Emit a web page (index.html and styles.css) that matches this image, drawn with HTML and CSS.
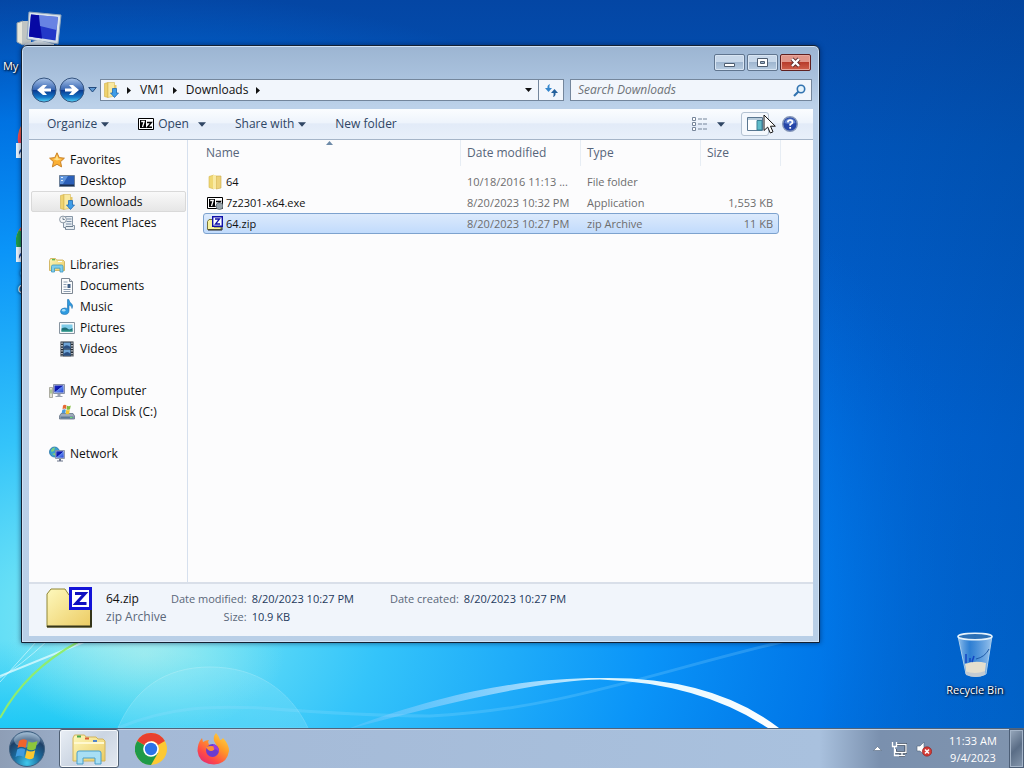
FILE: index.html
```html
<!DOCTYPE html>
<html lang="en">
  <head>
    <meta charset="UTF-8" />
    <meta name="viewport" content="width=device-width, initial-scale=1.0" />
    <title>Downloads</title>
    <link rel="stylesheet" href="styles.css">
  </head>
  <body>
    <!-- Icon symbols -->
    <svg class="defs" width="0" height="0">
      <defs>
        <linearGradient id="g-folder" x1="0" y1="0" x2="1" y2="1">
          <stop offset="0" stop-color="#fdf8bc" /><stop offset="1" stop-color="#eccb62" />
        </linearGradient>
        <linearGradient id="g-screen" x1="0" y1="0" x2="1" y2="1">
          <stop offset="0" stop-color="#1a2fc4" /><stop offset="0.45" stop-color="#0a12a8" /><stop offset="0.5" stop-color="#5f86ee" /><stop offset="1" stop-color="#2143d4" />
        </linearGradient>
        <linearGradient id="g-round" x1="0" y1="0" x2="0" y2="1">
          <stop offset="0" stop-color="#a8c3e8" /><stop offset="0.48" stop-color="#3a68b4" /><stop offset="0.52" stop-color="#0a3a90" /><stop offset="0.8" stop-color="#1578c8" /><stop offset="1" stop-color="#58d8f8" />
        </linearGradient>
        <radialGradient id="g-orb" cx="0.5" cy="0.9" r="0.85">
          <stop offset="0" stop-color="#3fc8ec" /><stop offset="0.45" stop-color="#1b6a9c" /><stop offset="0.8" stop-color="#1d3f66" /><stop offset="1" stop-color="#7d9cba" />
        </radialGradient>
        <linearGradient id="g-fox" x1="1" y1="0" x2="0.3" y2="1">
          <stop offset="0" stop-color="#ffe14a" /><stop offset="0.45" stop-color="#ff9a28" /><stop offset="0.8" stop-color="#ff4a48" /><stop offset="1" stop-color="#e8306a" />
        </linearGradient>
        <linearGradient id="g-bin" x1="0" y1="0" x2="1" y2="0">
          <stop offset="0" stop-color="#b8d8f4" stop-opacity="0.8" /><stop offset="0.35" stop-color="#5c9cdc" stop-opacity="0.5" /><stop offset="1" stop-color="#c0dcf6" stop-opacity="0.8" />
        </linearGradient>
      </defs>
      <symbol id="i-star" viewBox="0 0 16 16">
        <path d="M8 .8 10.2 5.6 15.4 6.2 11.5 9.7 12.6 14.9 8 12.3 3.4 14.9 4.5 9.7.6 6.2 5.8 5.6Z" fill="#fbb034" stroke="#c98228" />
        <path d="M8 3 9.3 6.5 12.8 7 8 8.4 4 7 6.5 6.5Z" fill="#ffe08a" />
      </symbol>
      <symbol id="i-desktop" viewBox="0 0 16 16">
        <path d="M.5 2.5h15v11H.5Z" fill="#2b5fb8" stroke="#6d8098" />
        <path d="M1 3h8L4 11H1Z" fill="#5f94dc" /><path d="M1 11.5h14V13H1Z" fill="#1c3050" /><path d="M2 4h2v1H2Zm0 3h2v1H2Z" fill="#dcecff" />
      </symbol>
      <symbol id="i-downloads" viewBox="0 0 16 16">
        <path d="M1.5 1.5 5 .5v15l-3.500-1Z" fill="#efd36e" stroke="#d0ae48" stroke-width=".6" />
        <path d="M5 .5h6.500v13.500L5 15.500Z" fill="#f9e9a0" stroke="#d5b757" stroke-width=".6" /><path d="M11 3h2.500v8H11Z" fill="#e3c76a" />
        <path d="M9.500 6.500h4V11h2l-4 4.500-4-4.500h2Z" fill="#3f9de8" stroke="#1f69b4" stroke-width=".8" />
      </symbol>
      <symbol id="i-recent" viewBox="0 0 16 16">
        <path d="M4.500 1.500h9v9h2v4H6.500v-2h-2Z" fill="#e7edf2" stroke="#8796a6" />
        <path d="M7.500 4h5M7.500 6.500h5M7 9h5.500" stroke="#7a8ea5" /><circle cx="4" cy="4.500" r="3.400" fill="#f4f6f8" stroke="#8b98a5" /><path d="M4 2.500v2h1.800M7 14.500q-2-2 0-3h7" fill="none" stroke="#6d7d8d" />
      </symbol>
      <symbol id="i-libraries" viewBox="0 0 16 16">
        <path d="M.5 3.500 1.500 1.500h5l1 1.500h6.500l1.500 1.500v9H.5Z" fill="url(#g-folder)" stroke="#caa94e" stroke-width=".8" />
        <path d="M3 2.700h3" stroke="#4ab04a" stroke-width="1.200" /><path d="M9 4.500h4" stroke="#fff" />
        <path d="M2.500 15v-5.500q0-1.500 1.500-1.500h8.500Q14 8 14 9.500V15h-3v-3.800H5.500V15Z" fill="#7fcdec" stroke="#3c98c2" stroke-width=".8" />
      </symbol>
      <symbol id="i-documents" viewBox="0 0 16 16">
        <path d="M2.500.5h8l3 3v12h-11Z" fill="#fbfcfd" stroke="#7d8793" /><path d="M10.500.5v3h3" fill="#d8dfe6" stroke="#7d8793" />
        <path d="M4.500 4h4m-4 2.500h3m-3 2.500h3m-3 2.500h7m-7 2h7" stroke="#8fa0b3" /><path d="M8.500 6h3v4h-3Z" fill="#3f5f86" />
      </symbol>
      <symbol id="i-music" viewBox="0 0 16 16">
        <path d="M8.500.5h1.300q.5 3 3 4.500 1.600 1.700.2 4.500.1-2.700-3-3.500v5.500q0 4-4.500 4Q1.500 15.500 1.500 12.500 1.500 9.300 5.500 9q2 0 3 .8Z" fill="#2f9be0" stroke="#1c6fae" stroke-width=".6" />
        <ellipse cx="4.700" cy="11.300" rx="1.800" ry="1.300" fill="#a4dcfa" />
      </symbol>
      <symbol id="i-pictures" viewBox="0 0 16 16">
        <path d="M.5 2.500h15v11H.5Z" fill="#f8fafb" stroke="#8794a0" /><path d="M2.500 4.500h11v7h-11Z" fill="#7fcbe8" />
        <path d="M2.500 8.500q4-2 6 0t5-.5v3.500h-11Z" fill="#1f6e78" /><path d="M2.500 10.500h11v1h-11Z" fill="#38a88a" />
      </symbol>
      <symbol id="i-videos" viewBox="0 0 16 16">
        <path d="M1.500.5h13v15h-13Z" fill="#232b34" /><path d="M4.500 1.500h7v6h-7Zm0 7h7v6h-7Z" fill="#6fa4d6" />
        <path d="M4.500 6q3-3.500 7 0v1.500h-7Zm0 7q4-4 7 0v1.500h-7Z" fill="#2a4f82" />
        <path d="M3 1.500v14M13 1.500v14" stroke="#e8edf2" stroke-width="1.400" stroke-dasharray="1.300 1.300" />
      </symbol>
      <symbol id="i-computer" viewBox="0 0 16 16">
        <path d="M.5 4.500h3v10h-3Z" fill="#e3e1d3" stroke="#9a9a8e" stroke-width=".8" /><path d="M1.500 6.500h1v4h-1Z" fill="#6ca34e" />
        <path d="M4.500 1.500h11v9h-11Z" fill="#c6ccda" stroke="#8b93a8" /><path d="M5.500 2.500h9v7h-9Z" fill="url(#g-screen)" /><path d="M8.500 11h3v2h2v1h-7v-1h2Z" fill="#9aa2b0" />
      </symbol>
      <symbol id="i-disk" viewBox="0 0 16 16">
        <path d="M2 9.500h12l1.500 2.500v3H.5v-3Z" fill="#9eabbb" stroke="#667588" stroke-width=".8" /><path d="M1.500 12.500h13v2h-13Z" fill="#5f7894" /><path d="M11 13h2.500v1H11Z" fill="#66e070" />
        <path d="M4 1.500q2-1.500 3.500 0L7 5q-2-1-3.500.500Z" fill="#e66a35" /><path d="M8 1.700q2 1 3.800-.2L11 5.200q-2 1-3.500 0Z" fill="#82bc3a" />
        <path d="M3.300 6q2-1.500 3.500-.3l-.5 4Q4.500 8.500 2.500 9.500Z" fill="#4d9ada" /><path d="M7.300 5.800q2 1 3.500 0l-.6 4q-2 .8-3.500-.1Z" fill="#f5c52e" />
      </symbol>
      <symbol id="i-network" viewBox="0 0 16 16">
        <circle cx="5.500" cy="6" r="5" fill="#3a9ed2" stroke="#2474a6" stroke-width=".8" /><path d="M2 4q2-3 4-2.500L5 5 2.500 6ZM3 8l3-1 1 3Z" fill="#7fd07c" />
        <path d="M6.500 4.500h9v8h-9Z" fill="#cdd3de" stroke="#7d88a0" stroke-width=".8" /><path d="M7.300 5.300h7.400v6.400H7.300Z" fill="url(#g-screen)" /><path d="M10 13h2v1.500h2v1H8v-1h2Z" fill="#69738a" />
      </symbol>
      <symbol id="i-folder" viewBox="0 0 16 16">
        <path d="M2 2.500 7 1v14l-5-1.500Z" fill="#f0d873" stroke="#d3b64f" stroke-width=".6" /><path d="M9 2h5v12l-5 1Z" fill="#edd27a" stroke="#c9aa48" stroke-width=".6" />
        <path d="M6 1h3v14H6Z" fill="#f9eaa4" />
      </symbol>
      <symbol id="i-7z" viewBox="0 0 16 12">
        <path d="M.5.5h15v11H.5Z" fill="#fff" stroke="#000" /><path d="M2 2h6v8H2Z" fill="#000" /><path d="M3.200 3.500h3L4.500 9" fill="none" stroke="#fff" stroke-width="1.300" />
        <path d="M9 4.500h4.300L9.500 9.200H14" fill="none" stroke="#000" stroke-width="1.500" />
      </symbol>
      <symbol id="i-zip" viewBox="0 0 46 42">
        <path d="M1 7 5 2h14l4 6h22v32H1Z" fill="url(#g-folder)" stroke="#8f8634" /><path d="M1 39.500h44V12" fill="none" stroke="#35351a" stroke-width="2" />
        <path d="M24.500 1.500h20v20h-20Z" fill="#fff" stroke="#1414d8" stroke-width="3" /><path d="M29 6.500h10L30 16.500H40.500" fill="none" stroke="#1010c0" stroke-width="3" />
      </symbol>
      <symbol id="i-zip-small" viewBox="0 0 16 16">
        <path d="M.5 5.500 2 3.500h5V11h7v2.500H.5Z" fill="#f8f3a0" stroke="#77743a" /><path d="M1 14h14v-3" fill="none" stroke="#222" />
        <path d="M5.700.7h9.600v9.600H5.700Z" fill="#fff" stroke="#1010a8" stroke-width="1.400" /><path d="M8 3h4.500L8.500 8H13" fill="none" stroke="#1010a8" stroke-width="1.300" />
      </symbol>
      <symbol id="i-chrome" viewBox="0 0 32 32">
        <circle cx="16" cy="16" r="16" fill="#fcc934" /><path d="M16 16 2.140 8A16 16 0 0 1 29.860 8Z" fill="#e8402f" />
        <path d="M2.140 8A16 16 0 0 0 16 32l6.900-12L16 16Z" fill="#1e9a48" /><path d="M16 8a8 8 0 0 1 6.900 12L16 16Z" fill="#fcc934" />
        <circle cx="16" cy="16" r="7.800" fill="#fff" /><circle cx="16" cy="16" r="6.200" fill="#2b73e8" />
      </symbol>
      <symbol id="i-firefox" viewBox="0 0 32 32">
        <path d="M19 0q3 3 4 7 2 0 3-2 6 6 6 13Q30 31 17 31.500 2 31 .5 18 .5 10 5 5l1 4q3-2 6-2-2 3 1 5l7 1-3-5q-1-5 2-8Z" fill="url(#g-fox)" />
        <circle cx="15.500" cy="17.500" r="6.500" fill="#6b3bd0" /><path d="M9 14q5-2 10 0-2 4-5 4-3 0-5-4Z" fill="#ff8a38" /><path d="M16 11q6 2 6 8-2-3-5-3Z" fill="#a13cd8" />
      </symbol>
      <symbol id="i-arrow-down" viewBox="0 0 7 4"><path d="M0 0h7L3.500 4Z" fill="currentColor" /></symbol>
      <symbol id="i-arrow-right" viewBox="0 0 4 7"><path d="M0 0v7l4-3.500Z" fill="currentColor" /></symbol>
    </svg>

    <main class="desktop">
      <svg class="wallpaper" viewBox="0 0 1024 728" preserveAspectRatio="none">
        <defs>
          <linearGradient id="sky" x1="0" y1="0" x2="0" y2="1">
            <stop offset="0" stop-color="#0446a4" /><stop offset="0.2" stop-color="#0155ba" /><stop offset="0.6" stop-color="#0064d6" /><stop offset="1" stop-color="#006cda" />
          </linearGradient>
          <radialGradient id="glow" gradientUnits="userSpaceOnUse" cx="110" cy="620" r="900" gradientTransform="translate(110 620) scale(1 .7) translate(-110 -620)">
            <stop offset="0" stop-color="#8ee8f4" /><stop offset="0.12" stop-color="#66dff6" /><stop offset="0.3" stop-color="#34c4fa" /><stop offset="0.6" stop-color="#0a94f8" /><stop offset="0.8" stop-color="#0078ea" stop-opacity=".85" /><stop offset="1" stop-color="#0064d2" stop-opacity="0" />
          </radialGradient>
          <radialGradient id="shine">
            <stop offset="0" stop-color="#c4f4ea" stop-opacity=".5" /><stop offset="1" stop-color="#c4f4ea" stop-opacity="0" />
          </radialGradient>
          <radialGradient id="corner">
            <stop offset="0" stop-color="#08c4f4" stop-opacity=".8" /><stop offset="1" stop-color="#08c4f4" stop-opacity="0" />
          </radialGradient>
          <linearGradient id="dark" x1="0" x2="1" y1="0" y2="0">
            <stop offset="0.8" stop-color="#00408c" stop-opacity="0" /><stop offset="1" stop-color="#00408c" stop-opacity=".25" />
          </linearGradient>
          <linearGradient id="streak" x1="0" x2="1" y1="0" y2="0">
            <stop offset="0" stop-color="#9cf" stop-opacity=".2" /><stop offset="0.6" stop-color="#d8f4ff" /><stop offset="1" stop-color="#fff" />
          </linearGradient>
        </defs>
        <path d="M0 0h1024v728H0Z" fill="url(#sky)" />
        <path d="M0 0h1024v728H0Z" fill="url(#glow)" />
        <ellipse cx="40" cy="740" rx="280" ry="100" fill="url(#corner)" />
        <ellipse cx="145" cy="655" rx="140" ry="80" fill="url(#shine)" />
        <path d="M0 0h1024v728H0Z" fill="url(#dark)" />
        <path d="M118 728C134 690 164 667 210 667S290 690 308 728Z" fill="#a4ecfc" opacity=".22" stroke="#fff" />
        <path d="M118 728C170 706 215 706 260 708 340 714 380 716 430 716 560 710 660 670 790 640" fill="none" stroke="#9ce0ff" stroke-width="3" opacity=".22" />
        <path d="M345 730C450 690 530 678 600 678Q712 676 779 728L768 728Q700 683 600 679.500 530 680 345 730Z" fill="url(#streak)" />
        <path d="M0 676Q30 664 84 642" fill="none" stroke="#e4fcff" stroke-width="2" opacity=".75" />
        <path d="M0 682Q18 662 36 642M0 678Q20 666 46 642" fill="none" stroke="#e4fcff" opacity=".6" />
        <path d="M0 718Q26 670 78 642" fill="none" stroke="#8fec70" stroke-width="2" />
      </svg>

      <button class="shortcut shortcut-computer">
        <svg width="48" height="42" viewBox="0 0 48 42">
          <path d="M3 17 9 15v24l-6-3Z" fill="#e6e6da" stroke="#96a2ac" /><path d="M9 15h8v22l-8 2Z" fill="#bfc4c2" />
          <path d="M15 6 47 9 44 38 13 33Z" fill="#d9e3ec" stroke="#8da4bc" /><path d="M17 8.500 44 11 41.500 34.500 15 30.500Z" fill="#2338c8" />
          <path d="M17 8.500 25 9.200 28 32.500 15 30.500Z" fill="#0709a4" /><path d="M25 9.200 44 11 42.500 24 26 20Z" fill="#86a4ee" opacity=".7" /><path d="M11 38 24 34 40 38v3H9Z" fill="#cdd6dc" />
        </svg>
        My Computer
      </button>
      <button class="shortcut shortcut-firefox" aria-label="Firefox">
        <svg width="48" height="48"><use href="#i-firefox" x="3" y="2" width="44" height="44" /><path d="M2 30h15v15H2Z" fill="#e8f2fa" /><path d="M5 42q-1-7 6-7v-3l4 4-4 4v-3q-4 0-6 5Z" fill="#1d4b98" /></svg>
      </button>
      <button class="shortcut shortcut-chrome">
        <svg width="48" height="48"><use href="#i-chrome" x="2" y="2" width="44" height="44" /><path d="M2 30h15v15H2Z" fill="#e8f2fa" /><path d="M5 42q-1-7 6-7v-3l4 4-4 4v-3q-4 0-6 5Z" fill="#1d4b98" /></svg>
        Google Chrome
      </button>
      <button class="shortcut shortcut-bin">
        <svg width="48" height="50" viewBox="0 0 48 50">
          <path d="M7 6h34l-6 38q-10 5-20 0Z" fill="url(#g-bin)" stroke="#a8cdec" />
          <path d="M14 34q10-4 21-1l-1 9q-10 4-19 0Z" fill="#e4dfce" /><path d="M14 41q10 4 20 0v4q-10 4-19 0Z" fill="#c3cbd2" />
          <path d="M15 24v9M19 28v4M23 26l-2 6" stroke="#1246c4" stroke-width="1.500" /><path d="M38 19q-4 8-13 10" fill="none" stroke="#1e5aa8" />
          <ellipse cx="24" cy="6.500" rx="17" ry="3.200" fill="#2c70b6" stroke="#e6f3fc" stroke-width="1.500" />
        </svg>
        Recycle Bin
      </button>

      <section class="window">
        <header class="titlebar">
          <button class="caption" aria-label="Minimize"><svg width="13" height="11"><path d="M1.500 6.500h10v3h-10Z" fill="#fff" stroke="#4e5d70" /></svg></button>
          <button class="caption" aria-label="Maximize"><svg width="13" height="11"><path d="M1.500 1.500h10v8h-10Z" fill="#fff" stroke="#4e5d70" /><path d="M4.500 4.500h4v2h-4Z" fill="#9fb5cc" stroke="#4e5d70" /></svg></button>
          <button class="caption caption-close" aria-label="Close"><svg width="13" height="11"><path d="m3 2 7 7m0-7-7 7" stroke="#5b2a2a" stroke-width="4" /><path d="m3 2 7 7m0-7-7 7" stroke="#fff" stroke-width="2.400" /></svg></button>
        </header>

        <div class="navbar">
          <button class="round" aria-label="Back"><svg width="26" height="26" viewBox="0 0 26 26"><circle cx="13" cy="13" r="12" fill="url(#g-round)" stroke="#35547f" /><path d="M20 11.500v3h-7l3 3.500h-4l-6-5 6-5h4l-3 3.500Z" fill="#fff" /></svg></button>
          <button class="round" aria-label="Forward"><svg width="26" height="26" viewBox="0 0 26 26"><circle cx="13" cy="13" r="12" fill="url(#g-round)" stroke="#35547f" /><path d="M6 11.500v3h7L10 18h4l6-5-6-5h-4l3 3.500Z" fill="#fff" /></svg></button>
          <button class="history" aria-label="Recent pages"><svg width="9" height="6"><path d="M.7.5h7.600L4.500 5Z" fill="#5f9ad4" stroke="#244b7e" /></svg></button>
          <div class="address">
            <svg width="16" height="16"><use href="#i-downloads" /></svg>
            <svg class="crumb-arrow" width="4" height="7"><use href="#i-arrow-right" /></svg>
            <button class="crumb">VM1</button>
            <svg class="crumb-arrow" width="4" height="7"><use href="#i-arrow-right" /></svg>
            <button class="crumb">Downloads</button>
            <svg class="crumb-arrow" width="4" height="7"><use href="#i-arrow-right" /></svg>
            <button class="address-drop" aria-label="Previous locations"><svg width="7" height="4"><use href="#i-arrow-down" /></svg></button>
            <button class="refresh" aria-label="Refresh"><svg width="15" height="15"><path d="M6 1Q3 2 3.500 5H1l3.500 4L8 5H5.500Q5 3 6 1Z" fill="#3486cc" /><path d="M9 14q3-1 2.500-4H14l-3.500-4L7 10h2.500Q10 12 9 14Z" fill="#24609c" /></svg></button>
          </div>
          <div class="search">
            <input type="text" placeholder="Search Downloads" aria-label="Search Downloads" />
            <svg width="13" height="13"><circle cx="8" cy="5" r="3.700" fill="#e5f3fc" stroke="#3273b0" stroke-width="1.600" /><path d="m5.500 7.500-4.500 4.500" stroke="#3273b0" stroke-width="2.200" /></svg>
          </div>
        </div>

        <div class="content">
          <div class="toolbar">
            <button class="tool">Organize <svg width="8" height="5"><use href="#i-arrow-down" /></svg></button>
            <button class="tool"><svg width="16" height="12"><use href="#i-7z" /></svg> Open <svg class="split" width="8" height="5"><use href="#i-arrow-down" /></svg></button>
            <button class="tool">Share with <svg width="8" height="5"><use href="#i-arrow-down" /></svg></button>
            <button class="tool">New folder</button>
            <div class="tool-right">
              <button class="tool tool-view" aria-label="Change your view">
                <svg width="16" height="14"><path d="M.5.5h3v3h-3Zm0 5h3v3h-3Zm0 5h3v3h-3Z" fill="#fff" stroke="#77869a" /><path d="M6 2h4m1 0h4M6 7h4m1 0h4M6 12h4m1 0h4" stroke="#77869a" /></svg>
                <svg width="8" height="5"><use href="#i-arrow-down" /></svg>
              </button>
              <button class="tool tool-preview" aria-label="Show the preview pane">
                <svg width="16" height="14"><path d="M.5.5h15v13H.5Z" fill="#fff" stroke="#5a7690" /><path d="M1 1h14v2H1Z" fill="#b8ccdc" /><path d="M10 3.500h5V13h-5Z" fill="#61bcc8" stroke="#3b7f94" /></svg>
              </button>
              <button class="tool" aria-label="Get help"><svg width="16" height="16"><circle cx="8" cy="8" r="7.300" fill="#2545a8" stroke="#8496b8" stroke-width="1.400" /><path d="M2.500 7Q3 2.500 8 2.500T13.500 7Q8 9 2.500 7Z" fill="#7a9de0" opacity=".7" /><path d="M5.800 6.300Q6 4.200 8.200 4.200t2.300 2Q10.500 7.500 8.200 8.500v1.300" fill="none" stroke="#fff" stroke-width="1.700" /><path d="M7.300 11h1.800v1.700H7.300Z" fill="#fff" /></svg></button>
            </div>
          </div>

          <div class="panes">
            <nav class="sidebar">
              <ul>
                <li><a href="#"><svg width="16" height="16"><use href="#i-star" /></svg>Favorites</a></li>
                <li><a class="child" href="#"><svg width="16" height="16"><use href="#i-desktop" /></svg>Desktop</a></li>
                <li><a class="child current" href="#"><svg width="16" height="16"><use href="#i-downloads" /></svg>Downloads</a></li>
                <li><a class="child" href="#"><svg width="16" height="16"><use href="#i-recent" /></svg>Recent Places</a></li>
              </ul>
              <ul>
                <li><a href="#"><svg width="16" height="16"><use href="#i-libraries" /></svg>Libraries</a></li>
                <li><a class="child" href="#"><svg width="16" height="16"><use href="#i-documents" /></svg>Documents</a></li>
                <li><a class="child" href="#"><svg width="16" height="16"><use href="#i-music" /></svg>Music</a></li>
                <li><a class="child" href="#"><svg width="16" height="16"><use href="#i-pictures" /></svg>Pictures</a></li>
                <li><a class="child" href="#"><svg width="16" height="16"><use href="#i-videos" /></svg>Videos</a></li>
              </ul>
              <ul>
                <li><a href="#"><svg width="16" height="16"><use href="#i-computer" /></svg>My Computer</a></li>
                <li><a class="child" href="#"><svg width="16" height="16"><use href="#i-disk" /></svg>Local Disk (C:)</a></li>
              </ul>
              <ul>
                <li><a href="#"><svg width="16" height="16"><use href="#i-network" /></svg>Network</a></li>
              </ul>
            </nav>

            <div class="files">
              <table>
                <thead>
                  <tr>
                    <th class="col-name">Name<svg class="sort" width="7" height="4"><path d="M0 4h7L3.500 0Z" fill="#6d8aa8" /></svg></th>
                    <th class="col-date">Date modified</th>
                    <th class="col-type">Type</th>
                    <th class="col-size">Size</th>
                  </tr>
                </thead>
                <tbody>
                  <tr>
                    <td><span class="file"><svg width="16" height="16"><use href="#i-folder" /></svg>64</span></td>
                    <td>10/18/2016 11:13 ...</td>
                    <td>File folder</td>
                    <td class="size"></td>
                  </tr>
                  <tr>
                    <td><span class="file"><svg width="16" height="16"><use href="#i-7z" y="2" height="12" /><path d="M9 11a3.500 3.500 0 1 0 7 0 3.500 3.500 0 1 0-7 0Z" fill="#9aa6ac" stroke="#56626a" stroke-width=".7" /></svg>7z2301-x64.exe</span></td>
                    <td>8/20/2023 10:32 PM</td>
                    <td>Application</td>
                    <td class="size">1,553 KB</td>
                  </tr>
                  <tr class="selected">
                    <td><span class="file"><svg width="16" height="16"><use href="#i-zip-small" /></svg>64.zip</span></td>
                    <td>8/20/2023 10:27 PM</td>
                    <td>zip Archive</td>
                    <td class="size">11 KB</td>
                  </tr>
                </tbody>
              </table>
            </div>
          </div>

          <footer class="details">
            <svg width="46" height="42"><use href="#i-zip" /></svg>
            <div class="details-name">
              <div class="title">64.zip</div>
              <div>zip Archive</div>
            </div>
            <dl>
              <dt>Date modified:</dt><dd>8/20/2023 10:27 PM</dd>
              <dt>Size:</dt><dd>10.9 KB</dd>
            </dl>
            <dl>
              <dt>Date created:</dt><dd>8/20/2023 10:27 PM</dd>
            </dl>
          </footer>
        </div>
      </section>

      <svg class="pointer" width="13" height="20"><path d="M1 1v15.500l3.700-3.400L7.300 19l2.700-1.200-2.500-5.600h4.800Z" fill="#fff" stroke="#111" /></svg>
    </main>

    <footer class="taskbar">
      <button class="start" aria-label="Start">
        <svg width="38" height="38" viewBox="0 0 38 38">
          <circle cx="19" cy="19" r="17.500" fill="url(#g-orb)" stroke="#3d5f80" /><ellipse cx="19" cy="10" rx="13" ry="7.500" fill="#c9dcec" opacity=".4" />
          <path d="M11 11q4-3 8-.5l-1.500 7.500q-4-2.500-8 0Z" fill="#f0642c" /><path d="M20.500 11.300q4 2.500 9-.3L27.500 19q-4 2.500-8.500 0Z" fill="#8cc63c" />
          <path d="M9.200 19.500q4-2.500 8 0L15.500 27q-4-2.500-8 0Z" fill="#3f9be0" /><path d="M18.700 20.300q4 2.500 8.500 0L25.500 28q-4 2.500-8.500-.2Z" fill="#fdc82f" />
        </svg>
      </button>
      <button class="task task-active" aria-label="Windows Explorer">
        <svg width="34" height="32" viewBox="0 0 34 32">
          <path d="M1 5 2.500 2h10L14 4h10l2 2h5l2 2v20H1Z" fill="url(#g-folder)" stroke="#d2b45c" /><path d="M5 3.500h4" stroke="#48a848" stroke-width="2" /><path d="M13 5.500h4" stroke="#d95c34" stroke-width="2" /><path d="M21 8h4" stroke="#5284c8" stroke-width="2" />
          <path d="M2 10h30" stroke="#fff8cf" stroke-width="2" /><path d="M5 31V20q0-2 2-2h20q2 0 2 2v11h-6v-6H11v6Z" fill="#a8dff4" stroke="#4a9fca" />
        </svg>
      </button>
      <button class="task" aria-label="Google Chrome"><svg width="32" height="32"><use href="#i-chrome" /></svg></button>
      <button class="task" aria-label="Firefox"><svg width="32" height="32"><use href="#i-firefox" /></svg></button>

      <div class="tray">
        <button class="tray-icon" aria-label="Show hidden icons"><svg width="9" height="5"><path d="M.5 4.500 4.500.5l4 4Z" fill="#fff" stroke="#56677c" stroke-width=".6" /></svg></button>
        <button class="tray-icon" aria-label="Network"><svg width="16" height="16"><path d="M5 3.500h10v8H4.500V8M8 14.500h6m-3-3v3" fill="none" stroke="#35455a" stroke-width="3" /><path d="M5.500 3.500h9.500v8H4.500V8M7 14.500h7m-3-3v3M1.500 1v4.500h4V1M3.500 5.500v9H7" fill="none" stroke="#fff" stroke-width="1.300" /></svg></button>
        <button class="tray-icon" aria-label="Volume muted"><svg width="16" height="16"><path d="M1 5h3l4-4v13l-4-4H1Z" fill="#fff" stroke="#53647a" stroke-width=".6" /><circle cx="11" cy="10.500" r="4.700" fill="#d23a34" stroke="#8e1f1c" stroke-width=".6" /><path d="m9 8.500 4 4m0-4-4 4" stroke="#fff" stroke-width="1.600" /></svg></button>
        <div class="clock">11:33 AM<br />9/4/2023</div>
        <button class="show-desktop" aria-label="Show desktop"></button>
      </div>
    </footer>
  </body>
</html>
```
FILE: styles.css
```css
* {
  box-sizing: border-box;
}
body {
  margin: 0;
  height: 100vh;
  display: flex;
  flex-direction: column;
  overflow: hidden;
  font-family: "Open Sans", "Noto Sans", sans-serif;
  font-size: 12px;
  line-height: 18px;
  color: #111;
}
button {
  padding: 0;
  border: 0;
  background: none;
  font: inherit;
  color: inherit;
}
svg {
  flex-shrink: 0;
}
ul,
dl,
dd {
  margin: 0;
  padding: 0;
  list-style: none;
}
.defs {
  position: absolute;
}

/* Desktop */
.desktop {
  position: relative;
  flex: 1;
  min-height: 0;
  overflow: hidden;
}
.wallpaper {
  position: absolute;
  width: 100%;
  height: 100%;
}
.shortcut {
  position: absolute;
  width: 76px;
  display: flex;
  flex-direction: column;
  align-items: center;
  color: #fff;
  font-size: 11px;
  line-height: 16px;
  text-shadow: 1px 1px 2px #000, 0 0 3px #002;
}
.shortcut-computer {
  left: 0;
  top: 6px;
  gap: 10px;
}
.shortcut-firefox {
  left: 0;
  top: 113px;
}
.shortcut-chrome {
  left: 0;
  top: 217px;
}
.shortcut-bin {
  right: 11px;
  top: 630px;
  gap: 2px;
}

/* Explorer window */
.window {
  position: absolute;
  left: 21px;
  top: 45px;
  width: 799px;
  height: 598px;
  display: flex;
  flex-direction: column;
  padding: 0 6px 6px 7px;
  border: 1px solid #142133;
  border-radius: 6px 6px 0 0;
  background: linear-gradient(#9cb5d2, #a9c1dd 30px, #bcd1e9 60px, #b9cfe7);
  box-shadow: inset 0 0 0 1px #cfe2f6, 0 0 5px rgba(0, 20, 60, 0.6);
}
.titlebar {
  display: flex;
  justify-content: flex-end;
  gap: 2px;
  height: 31px;
  padding: 8px 2px 0;
}
.caption {
  width: 31px;
  height: 17px;
  display: flex;
  align-items: center;
  justify-content: center;
  border: 1px solid #60758f;
  border-radius: 2px;
  background: linear-gradient(#c8d8ea 45%, #9fb6d0 50%, #b9cde2);
  box-shadow: inset 0 0 0 1px #d8e5f3;
}
.caption-close {
  border-color: #5f2020;
  background: linear-gradient(#e0968a 45%, #b83c2c 50%, #d0614c);
  box-shadow: inset 0 0 0 1px #e9a79c;
}
.navbar {
  display: flex;
  align-items: center;
  height: 32px;
  padding: 0 1px 6px 2px;
}
.round {
  width: 26px;
  height: 26px;
  margin-right: 2px;
}
.round svg,
.history svg {
  display: block;
}
.history {
  margin: 0 3px 0 1px;
}
.address {
  flex: 1;
  display: flex;
  align-items: center;
  height: 22px;
  padding-left: 2px;
  border: 1px solid #74869c;
  background: #f2f6fc;
}
.crumb-arrow {
  margin: 0 9px 0 8px;
}
.address-drop {
  width: 20px;
  height: 20px;
  margin-left: auto;
}
.address-drop svg,
.refresh svg {
  display: block;
  margin: auto;
}
.refresh {
  width: 25px;
  height: 20px;
  border-left: 1px solid #74869c;
}
.search {
  display: flex;
  align-items: center;
  width: 242px;
  height: 22px;
  margin-left: 6px;
  padding: 0 5px 0 7px;
  border: 1px solid #74869c;
  background: #f2f6fc;
}
.search input {
  flex: 1;
  min-width: 0;
  padding: 0;
  border: 0;
  background: none;
  font: inherit;
  font-style: italic;
}
.search input::placeholder {
  color: #6d7278;
}
.content {
  flex: 1;
  min-height: 0;
  display: flex;
  flex-direction: column;
  background: #fcfcfd;
}
.toolbar {
  display: flex;
  align-items: center;
  gap: 29px;
  height: 31px;
  padding: 0 15px 0 18px;
  border-bottom: 1px solid #a5b5c8;
  background: linear-gradient(#fbfdff, #eef4fc 45%, #e2ebf8 50%, #e8f0fa);
  color: #2f4664;
}
.tool {
  display: flex;
  align-items: center;
  gap: 4px;
}
.split {
  margin-left: 5px;
}
.tool-right {
  display: flex;
  align-items: center;
  margin-left: auto;
}
.tool-view {
  gap: 9px;
  margin-right: 16px;
}
.tool-preview {
  justify-content: center;
  width: 28px;
  height: 24px;
  margin-right: 13px;
  border: 1px solid #b4c2d2;
  border-radius: 3px;
  background: #f4f8fd;
}
.panes {
  flex: 1;
  min-height: 0;
  display: flex;
}
.sidebar {
  display: flex;
  flex-direction: column;
  gap: 21px;
  width: 159px;
  padding: 9px 1px 0 2px;
  border-right: 1px solid #d6e0ee;
}
.sidebar a {
  display: flex;
  align-items: center;
  gap: 5px;
  height: 21px;
  padding-left: 17px;
  border: 1px solid transparent;
  color: #111;
  text-decoration: none;
}
.sidebar .child {
  padding-left: 27px;
}
.sidebar .current {
  border-color: #d9d9d9;
  border-radius: 2px;
  background: linear-gradient(#f9f9f9, #e6e6e6);
}
.files {
  position: relative;
  z-index: 0;
  flex: 1;
  padding-left: 15px;
}
table {
  table-layout: fixed;
  width: 578px;
  border-spacing: 0;
}
/* Column separators stop above the first row */
th {
  position: relative;
  height: 31px;
  padding: 0 0 5px 6px;
  background: linear-gradient(#e7edf4, #e7edf4) right top / 1px 26px no-repeat;
  font-weight: normal;
  text-align: left;
  color: #56657a;
}
.col-name {
  width: 258px;
  padding-left: 3px;
}
.col-date,
.col-type {
  width: 120px;
}
.sort {
  position: absolute;
  left: 123px;
  top: 1px;
}
td {
  height: 21px;
  padding: 0 0 0 6px;
  font-size: 11px;
  color: #6d6d6d;
  white-space: nowrap;
}
td:first-child {
  position: relative;
  padding-left: 4px;
  color: #111;
}
td.size {
  padding: 0 8px 0 0;
  text-align: right;
}
.file {
  display: flex;
  align-items: center;
  gap: 3px;
}
/* The row highlight stops short of the last column's edge */
.selected td:first-child::after {
  content: "";
  position: absolute;
  left: 0;
  top: 0;
  bottom: 0;
  width: 574px;
  border: 1px solid #7da2ce;
  border-radius: 3px;
  background: linear-gradient(#dceafc, #c1dbfc);
  z-index: -1;
}
.details {
  display: flex;
  height: 54px;
  padding: 3px 0 0 17px;
  border-top: 2px solid #d9dfe9;
  background: #f1f5fb;
  color: #5a6779;
}
.details-name {
  width: 65px;
  margin: 3px 0 0 14px;
  white-space: nowrap;
}
.details .title {
  color: #111;
}
.details dl {
  display: grid;
  grid-template-columns: auto auto;
  column-gap: 5px;
  align-content: start;
  margin: 3px 36px 0 0;
  font-size: 11px;
}
.details dt {
  text-align: right;
}
.details dd {
  color: #1e395b;
}
.pointer {
  position: absolute;
  left: 763px;
  top: 114px;
}

/* Taskbar */
.taskbar {
  display: flex;
  align-items: center;
  height: 40px;
  padding-left: 8px;
  border-top: 1px solid #50647c;
  background: linear-gradient(90deg, #8e9eb6, #a4b9d6 120px, #a9c1de 80%, #7a90ae 86%, #8094ae);
  box-shadow: inset 0 1px 0 #c3d2e4;
}
.start {
  width: 38px;
  height: 38px;
  margin-right: 13px;
}
.start svg {
  display: block;
}
.task {
  width: 60px;
  height: 39px;
  margin-right: 2px;
  display: flex;
  align-items: center;
  justify-content: center;
}
.task-active {
  border: 1px solid #4f5f73;
  border-radius: 3px;
  background: linear-gradient(135deg, #e9eef5, #cbd5e2 50%, #e3e9f1);
  box-shadow: inset 0 0 0 1px #f6f9fc;
}
.tray {
  display: flex;
  align-items: center;
  height: 39px;
  margin-left: auto;
  color: #fff;
}
.tray-icon {
  padding: 0 5px 0 4px;
}
.tray-icon svg {
  display: block;
}
.clock {
  width: 72px;
  font-size: 11px;
  line-height: 17px;
  text-align: center;
}
.show-desktop {
  width: 15px;
  height: 39px;
  border: 1px solid #4c5e76;
  background: linear-gradient(135deg, #99a9bd, #5a6d86 50%, #8597ad);
  box-shadow: inset 0 0 0 1px #a4b4c8;
}
```
